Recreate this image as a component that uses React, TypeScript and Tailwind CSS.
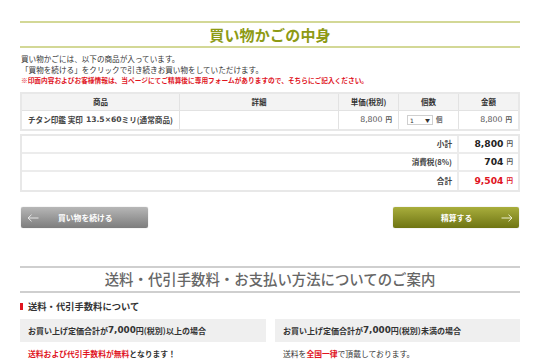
import React from "react";

const jp = "font-['Noto_Sans_CJK_JP',sans-serif]";
const num = "font-['DejaVu_Sans',sans-serif]";

function ArrowLeft() {
  return (
    <svg width="12" height="8" viewBox="0 0 12 8" className="block">
      <path d="M11.5 4H1M4.5 0.7L1 4l3.5 3.3" fill="none" stroke="#e6e6e6" strokeWidth="1" />
    </svg>
  );
}
function ArrowRight() {
  return (
    <svg width="12" height="8" viewBox="0 0 12 8" className="block">
      <path d="M0.5 4H11M7.5 0.7L11 4l-3.5 3.3" fill="none" stroke="#eef0d0" strokeWidth="1" />
    </svg>
  );
}

function Yen() {
  return <span className={`${jp} text-[6.5px] font-bold ml-[3px] text-[#555]`}>円</span>;
}

export default function App() {
  return (
    <div className={`w-[540px] h-[360px] overflow-hidden bg-white ${jp} text-[#333]`}>
      <div className="w-[500px] mx-auto pt-[21px]">
        {/* Title */}
        <div className="h-[27px] border-t-2 border-b-2 border-[#d3d896] flex items-center justify-center">
          <h1 className="text-[15px] font-bold text-[#8d9a14] leading-none tracking-[0.2px]">買い物かごの中身</h1>
        </div>

        {/* Intro text */}
        <div className="mt-[5px] text-[7.6px] leading-[11px] px-[1px]">
          <p>買い物かごには、以下の商品が入っています。</p>
          <p>「買物を続ける」をクリックで引き続きお買い物をしていただけます。</p>
          <p className="text-[#e0141e] font-bold text-[6.7px]">
            ※印面内容およびお客様情報は、当ページにてご精算後に専用フォームがありますので、そちらにご記入ください。
          </p>
        </div>

        {/* Items table */}
        <div className="mt-[6px] border-2 border-[#e8e8e8]">
          <div className="grid grid-cols-[158px_159px_60px_60px_59px] h-[17px] bg-[#f3f3f3] text-[7.5px] font-bold text-[#333] border-b border-[#e2e2e2]">
            <div className="flex items-center justify-center border-r border-[#e2e2e2]">商品</div>
            <div className="flex items-center justify-center border-r border-[#e2e2e2]">詳細</div>
            <div className="flex items-center justify-center border-r border-[#e2e2e2]">単価(税別)</div>
            <div className="flex items-center justify-center border-r border-[#e2e2e2]">個数</div>
            <div className="flex items-center justify-center">金額</div>
          </div>
          <div className="grid grid-cols-[158px_159px_60px_60px_59px] h-[18px] text-[7px] text-[#333]">
            <div className="flex items-center pl-[6px] border-r border-[#e2e2e2] font-bold text-[#444] text-[7.6px]">
              チタン印鑑 実印 <span className={`${num} ml-[3px] text-[7.6px]`}>13.5×60</span>ミリ(通常商品)
            </div>
            <div className="border-r border-[#e2e2e2]"></div>
            <div className={`flex items-center justify-end pr-[6px] border-r border-[#e2e2e2] ${num} text-[7.8px] text-[#555]`}>
              8,800<Yen />
            </div>
            <div className="flex items-center pl-[8px] border-r border-[#e2e2e2] gap-[3px]">
              <div className="w-[26px] h-[10px] border border-[#cfcfcf] flex items-center justify-between px-[2px] text-[6px] bg-white">
                <span className={num}>1</span>
                <span className="text-[5px]">▼</span>
              </div>
              <span className="text-[6.5px] font-bold text-[#666]">個</span>
            </div>
            <div className={`flex items-center justify-end pr-[6px] ${num} text-[7.8px] text-[#555]`}>
              8,800<Yen />
            </div>
          </div>
        </div>

        {/* Totals */}
        <div className="mt-[3px] border-2 border-[#e8e8e8]">
          {[
            { label: "小計", value: "8,800", red: false },
            { label: "消費税(8%)", value: "704", red: false },
            { label: "合計", value: "9,504", red: true },
          ].map((r, i) => (
            <div
              key={i}
              className={`grid grid-cols-[437px_59px] h-[18px] ${i < 2 ? "border-b-2 border-[#ececec]" : ""}`}
            >
              <div className="flex items-center justify-end pr-[5px] border-r-2 border-[#ececec] text-[7.6px] font-bold text-[#444]">
                {r.label}
              </div>
              <div
                className={`flex items-center justify-end pr-[5px] ${num} text-[9.2px] font-bold ${
                  r.red ? "text-[#e0141e]" : "text-[#222]"
                }`}
              >
                {r.value}
                <span className={`${jp} text-[6.5px] font-bold ml-[3px] ${r.red ? "text-[#e0141e]" : "text-[#555]"}`}>円</span>
              </div>
            </div>
          ))}
        </div>

        {/* Buttons */}
        <div className="mt-[15px] flex justify-between px-[1px]">
          <div className="w-[127px] h-[21px] rounded-[2px] bg-gradient-to-b from-[#b7b7b7] to-[#7d7d7d] shadow-[0_0_1px_rgba(0,0,0,0.35)] flex items-center pl-[6px] relative">
            <ArrowLeft />
            <span className="absolute left-[37px] text-[7.8px] font-bold text-white">買い物を続ける</span>
          </div>
          <div className="w-[126px] h-[21px] rounded-[2px] bg-gradient-to-b from-[#a9ae3c] to-[#6f7512] shadow-[0_0_1px_rgba(0,0,0,0.35)] flex items-center justify-end pr-[6px] relative">
            <span className="absolute left-[48px] text-[7.8px] font-bold text-white">精算する</span>
            <ArrowRight />
          </div>
        </div>

        {/* Section 2 */}
        <div className="mt-[38px] h-[27px] border-t-2 border-b-2 border-[#cfcfcf] flex items-center justify-center">
          <h2 className="text-[14.4px] font-medium text-[#666] leading-none">送料・代引手数料・お支払い方法についてのご案内</h2>
        </div>

        <div className="mt-[9px] flex items-center">
          <div className="w-[3px] h-[7px] bg-[#e0141e]"></div>
          <h3 className="ml-[5px] text-[9.3px] font-bold text-[#333] leading-none">送料・代引手数料について</h3>
        </div>

        <div className="mt-[8px] flex justify-between">
          <div className="w-[246px]">
            <div className="h-[23px] bg-[#efefef] flex items-center pl-[8px] text-[8px] font-bold text-[#333]">
              お買い上げ定価合計が<span className={`${num} text-[8.8px]`}>7,000</span>円(税別)以上の場合
            </div>
            <div className="mt-[6px] pl-[8px] text-[7.8px] leading-[11px] font-bold">
              <p>
                <span className="text-[#e0141e]">送料および代引手数料が無料</span>となります！
              </p>
              <p className="font-normal">配達はヤマト運輸宅急便・ゆうパック・佐川急便のいずれかでお届けします。</p>
            </div>
          </div>
          <div className="w-[245px]">
            <div className="h-[23px] bg-[#efefef] flex items-center pl-[8px] text-[8px] font-bold text-[#333]">
              お買い上げ定価合計が<span className={`${num} text-[8.8px]`}>7,000</span>円(税別)未満の場合
            </div>
            <div className="mt-[6px] pl-[8px] text-[7.8px] leading-[11px]">
              <p>
                送料を<span className="text-[#e0141e] font-bold">全国一律</span>で頂戴しております。
              </p>
              <p>代引きをお選びいただいたお客様は、代引き手数料として300円</p>
            </div>
          </div>
        </div>
      </div>
    </div>
  );
}
